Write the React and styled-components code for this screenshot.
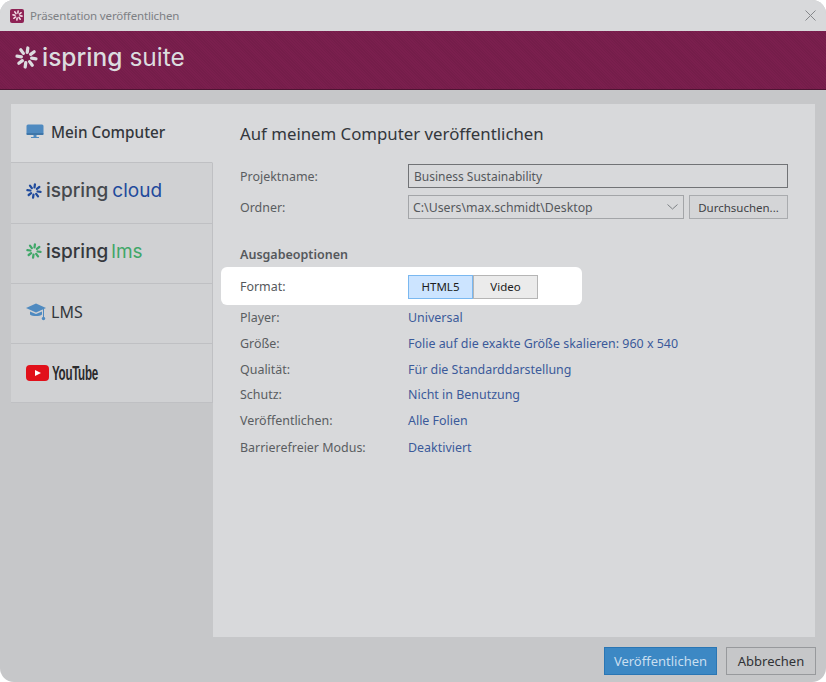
import React from 'react';
import styled, { createGlobalStyle } from 'styled-components';

const GlobalStyle = createGlobalStyle`
  html, body { margin: 0; padding: 0; background: #fff; }
  body { font-family: "Noto Sans", "Open Sans", sans-serif; }
  * { box-sizing: border-box; }
`;

const Window = styled.div`
  width: 826px;
  height: 682px;
  display: flex;
  flex-direction: column;
  background: #c6c7c9;
  border-radius: 14px;
  overflow: hidden;
`;

const TitleBar = styled.div`
  height: 31px;
  flex: none;
  display: flex;
  align-items: center;
  padding: 0 10px;
  gap: 6px;
  background: #d8d9db;
  color: #7d8084;
  font-size: 11.5px;
  letter-spacing: -0.15px;
`;

const AppIcon = styled.div`
  width: 14px;
  height: 14px;
  border-radius: 2px;
  background: #8e2355;
  display: flex;
  align-items: center;
  justify-content: center;
`;

const CloseIcon = styled.svg`
  margin-left: auto;
`;

const Banner = styled.div`
  height: 59px;
  flex: none;
  display: flex;
  align-items: center;
  padding: 0 15px 5px;
  gap: 4px;
  color: #dcdcdf;
  background-color: #7b1f4e;
  background-image: repeating-linear-gradient(45deg, rgba(0, 0, 0, 0.05) 0 1px, transparent 1px 2px);
  border-bottom: 1px solid #4e1433;
`;

const Wordmark = styled.div`
  font-family: "Inter", sans-serif;
  font-size: ${(p) => p.$size}px;
  font-weight: 500;
  line-height: 1;
  color: ${(p) => p.$color || 'inherit'};
  & > span {
    font-weight: 400;
    margin-left: ${(p) => p.$gap}px;
    color: ${(p) => p.$accent || 'inherit'};
  }
`;

const Main = styled.div`
  flex: 1;
  display: flex;
  padding: 14px 11px 0;
  align-items: flex-start;
`;

const Sidebar = styled.div`
  width: 202px;
  flex: none;
  display: flex;
  flex-direction: column;
`;

const Tab = styled.div`
  height: ${(p) => p.$h}px;
  display: flex;
  align-items: center;
  gap: ${(p) => p.$gap || 7}px;
  padding: 0 0 ${(p) => p.$pb ?? 3}px 15px;
  background: ${(p) => (p.$active ? '#d8d9db' : '#d0d1d3')};
  border-right: 1px solid ${(p) => (p.$active ? '#d8d9db' : '#bfc0c3')};
  border-bottom: 1px solid #bfc0c3;
  font-size: ${(p) => (p.$active ? 15.3 : 16)}px;
  font-weight: ${(p) => (p.$active ? 500 : 400)};
  color: #33373c;
`;

const YoutubeText = styled.span`
  font-family: "Liberation Sans", sans-serif;
  font-weight: 700;
  font-size: 20px;
  letter-spacing: -0.5px;
  color: #2b2b2d;
  display: inline-block;
  transform: scaleX(0.58);
  transform-origin: left center;
`;

const Panel = styled.div`
  width: 602px;
  height: 533px;
  flex: none;
  background: #d8d9db;
  padding: 18px 27px 0;
`;

const Heading = styled.div`
  font-size: 16.8px;
  line-height: 24px;
  color: #33373c;
  margin-bottom: 17px;
`;

const Row = styled.div`
  display: flex;
  align-items: center;
  height: ${(p) => p.$h}px;
  font-size: 12.45px;
  color: #5a5d61;
`;

const Label = styled.div`
  width: 168px;
  flex: none;
`;

const Value = styled.div`
  color: #3b5a9a;
`;

const TextBox = styled.div`
  width: 380px;
  height: 24px;
  display: flex;
  align-items: center;
  padding: 0 5px;
  border: 1px solid #717376;
  font-size: 12px;
  color: #55585c;
`;

const Combo = styled.div`
  width: 276px;
  height: 24px;
  display: flex;
  align-items: center;
  justify-content: space-between;
  padding: 0 5px 0 4px;
  border: 1px solid #a3a5a8;
  font-size: 12.3px;
  color: #55585c;
`;

const BrowseButton = styled.div`
  width: 99px;
  height: 24px;
  margin-left: 5px;
  display: flex;
  align-items: center;
  justify-content: center;
  border: 1px solid #a9abae;
  background: #d4d5d7;
  font-size: 11.5px;
  color: #3f4145;
`;

const SectionTitle = styled.div`
  font-size: 12.5px;
  font-weight: 600;
  line-height: 20px;
  color: #55585c;
  margin: 20px 0 2px;
`;

const Highlight = styled.div`
  display: flex;
  align-items: center;
  width: 361px;
  height: 38px;
  margin-left: -19px;
  padding-left: 19px;
  background: #fff;
  border-radius: 6px;
  font-size: 12.45px;
  color: #55585c;
`;

const Segment = styled.div`
  width: 65px;
  height: 24px;
  margin-top: 1px;
  display: flex;
  align-items: center;
  justify-content: center;
  font-size: 11.5px;
  color: #1c1c20;
  background: ${(p) => (p.$on ? '#cce4ff' : '#ebebeb')};
  border: 1px solid ${(p) => (p.$on ? '#7ab8f0' : '#b5b5b5')};
`;

const Footer = styled.div`
  height: 45px;
  flex: none;
  display: flex;
  justify-content: flex-end;
  align-items: flex-start;
  padding: 10px 10px 0 0;
  gap: 9px;
`;

const FooterButton = styled.div`
  width: ${(p) => p.$w}px;
  height: 28px;
  display: flex;
  align-items: center;
  justify-content: center;
  font-size: 13px;
  color: ${(p) => (p.$primary ? '#c9dff0' : '#303236')};
  background: ${(p) => (p.$primary ? '#3c88c4' : 'transparent')};
  border: 1px solid ${(p) => (p.$primary ? '#2a76b4' : '#97999c')};
`;

const Spark = ({ size, color }) => (
  <svg width={size} height={size} viewBox="0 0 24 24">
    {[0, 45, 90, 135, 180, 225, 270, 315].map((a) => (
      <line
        key={a}
        x1="12"
        y1="2"
        x2="12"
        y2="6.6"
        stroke={color}
        strokeWidth="3.4"
        strokeLinecap="round"
        transform={`rotate(${a + 8} 12 12)`}
      />
    ))}
  </svg>
);

const MonitorIcon = () => (
  <svg width="18" height="15" viewBox="0 0 18 15">
    <rect x="0.5" y="0.5" width="17" height="10.5" rx="1.5" fill="#4f8ac0" />
    <rect x="0.5" y="9" width="17" height="2" rx="1" fill="#3f76a8" />
    <rect x="7.5" y="11" width="3" height="2" fill="#4f8ac0" />
    <rect x="5" y="13" width="8" height="1" fill="#4f8ac0" />
  </svg>
);

const CapIcon = () => (
  <svg width="20" height="18" viewBox="0 0 20 18">
    <path d="M10 0.5 L20 5 L10 9.5 L0 5 Z" fill="#4f8ac0" />
    <path d="M4 8.5 L10 11 L16 8.5 V11.5 C14 13.5 6 13.5 4 11.5 Z" fill="#4f8ac0" />
    <rect x="17" y="6" width="1" height="9" fill="#4f8ac0" />
    <circle cx="17.5" cy="15.5" r="1.7" fill="#4f8ac0" />
  </svg>
);

const YoutubeIcon = () => (
  <svg width="23" height="16" viewBox="0 0 23 16">
    <rect width="23" height="16" rx="4" fill="#e1101a" />
    <path d="M9 5 L15 8 L9 11 Z" fill="#fff" />
  </svg>
);

const OPTIONS = [
  { label: 'Player:', value: 'Universal', h: 25 },
  { label: 'Größe:', value: 'Folie auf die exakte Größe skalieren: 960 x 540', h: 26 },
  { label: 'Qualität:', value: 'Für die Standarddarstellung', h: 26 },
  { label: 'Schutz:', value: 'Nicht in Benutzung', h: 25 },
  { label: 'Veröffentlichen:', value: 'Alle Folien', h: 26 },
  { label: 'Barrierefreier Modus:', value: 'Deaktiviert', h: 28 },
];

export default function App() {
  return (
    <>
      <GlobalStyle />
      <Window>
        <TitleBar>
          <AppIcon>
            <Spark size={11} color="#f2dbe6" />
          </AppIcon>
          Präsentation veröffentlichen
          <CloseIcon width="11" height="11" viewBox="0 0 11 11">
            <path d="M0.5 0.5 L10.5 10.5 M10.5 0.5 L0.5 10.5" stroke="#85878a" strokeWidth="1" />
          </CloseIcon>
        </TitleBar>
        <Banner>
          <Spark size={23} color="#dcdcdf" />
          <Wordmark $size={24.5} $gap={7}>
            ispring<span>suite</span>
          </Wordmark>
        </Banner>
        <Main>
          <Sidebar>
            <Tab $h={59} $active>
              <MonitorIcon />
              Mein Computer
            </Tab>
            <Tab $h={61} $gap={4} $pb={5}>
              <Spark size={16} color="#1f4a9c" />
              <Wordmark $size={19} $gap={4} $color="#45484d" $accent="#1f4a9c">
                ispring<span>cloud</span>
              </Wordmark>
            </Tab>
            <Tab $h={60} $gap={4} $pb={5}>
              <Spark size={16} color="#3fa768" />
              <Wordmark $size={19} $gap={3} $color="#35383d" $accent="#3fa768">
                ispring<span>lms</span>
              </Wordmark>
            </Tab>
            <Tab $h={60} $gap={5}>
              <CapIcon />
              LMS
            </Tab>
            <Tab $h={59} $gap={3} $pb={0}>
              <YoutubeIcon />
              <YoutubeText>YouTube</YoutubeText>
            </Tab>
          </Sidebar>
          <Panel>
            <Heading>Auf meinem Computer veröffentlichen</Heading>
            <Row $h={26}>
              <Label>Projektname:</Label>
              <TextBox>Business Sustainability</TextBox>
            </Row>
            <Row $h={36}>
              <Label>Ordner:</Label>
              <Combo>
                C:\Users\max.schmidt\Desktop
                <svg width="11" height="6" viewBox="0 0 11 6">
                  <path d="M0.5 0.5 L5.5 5 L10.5 0.5" fill="none" stroke="#7d8084" />
                </svg>
              </Combo>
              <BrowseButton>Durchsuchen...</BrowseButton>
            </Row>
            <SectionTitle>Ausgabeoptionen</SectionTitle>
            <Highlight>
              <Label>Format:</Label>
              <Segment $on>HTML5</Segment>
              <Segment>Video</Segment>
            </Highlight>
            {OPTIONS.map((o) => (
              <Row key={o.label} $h={o.h}>
                <Label>{o.label}</Label>
                <Value>{o.value}</Value>
              </Row>
            ))}
          </Panel>
        </Main>
        <Footer>
          <FooterButton $w={113} $primary>
            Veröffentlichen
          </FooterButton>
          <FooterButton $w={90}>Abbrechen</FooterButton>
        </Footer>
      </Window>
    </>
  );
}
